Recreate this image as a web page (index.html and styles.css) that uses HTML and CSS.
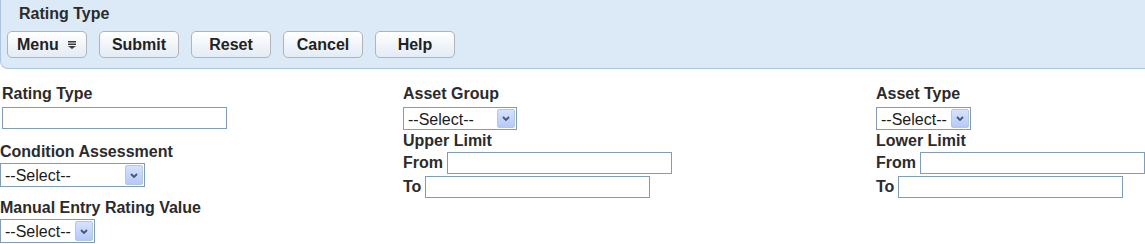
FILE: index.html
```html
<!DOCTYPE html>
<html lang="en">

<head>
    <meta charset="utf-8" />
    <title>Rating Type</title>
    <link rel="stylesheet" href="styles.css">
</head>

<body>
    <header class="toolbar">
        <div class="toolbar-title">Rating Type</div>
        <div class="toolbar-buttons">
            <button type="button" class="btn btn-menu">Menu
                <svg class="menu-icon" width="8" height="8" viewBox="0 0 8 8">
                    <rect x="0" y="0" width="8" height="1.5" fill="#3a3a3a" />
                    <rect x="0" y="2.5" width="8" height="1.5" fill="#3a3a3a" />
                    <polygon points="0,5 8,5 4,8" fill="#3a3a3a" />
                </svg>
            </button>
            <button type="button" class="btn">Submit</button>
            <button type="button" class="btn">Reset</button>
            <button type="button" class="btn">Cancel</button>
            <button type="button" class="btn">Help</button>
        </div>
    </header>

    <main class="form">
        <div class="column">
            <div class="field field-indent">
                <label class="field-label">Rating Type</label>
                <input type="text" class="text-input input-gap" />
            </div>
            <div class="field field-next">
                <label class="field-label">Condition Assessment</label>
                <div class="select select-wide">
                    <span class="select-text">--Select--</span>
                    <span class="select-arrow">
                        <svg width="8" height="5" viewBox="0 0 8 5"><polyline points="1,1 4,4 7,1" fill="none" stroke="#42567c" stroke-width="1.8" /></svg>
                    </span>
                </div>
            </div>
            <div class="field field-last">
                <label class="field-label">Manual Entry Rating Value</label>
                <div class="select select-narrow">
                    <span class="select-text">--Select--</span>
                    <span class="select-arrow">
                        <svg width="8" height="5" viewBox="0 0 8 5"><polyline points="1,1 4,4 7,1" fill="none" stroke="#42567c" stroke-width="1.8" /></svg>
                    </span>
                </div>
            </div>
        </div>

        <div class="column">
            <div class="field">
                <label class="field-label">Asset Group</label>
                <div class="select select-short select-medium">
                    <span class="select-text">--Select--</span>
                    <span class="select-arrow">
                        <svg width="8" height="5" viewBox="0 0 8 5"><polyline points="1,1 4,4 7,1" fill="none" stroke="#42567c" stroke-width="1.8" /></svg>
                    </span>
                </div>
            </div>
            <div class="range">
                <div class="field-label">Upper Limit</div>
                <div class="range-row">
                    <label class="range-label">From</label>
                    <input type="text" class="text-input range-input" />
                </div>
                <div class="range-row">
                    <label class="range-label">To</label>
                    <input type="text" class="text-input range-input" />
                </div>
            </div>
        </div>

        <div class="column">
            <div class="field">
                <label class="field-label">Asset Type</label>
                <div class="select select-short select-narrow">
                    <span class="select-text">--Select--</span>
                    <span class="select-arrow">
                        <svg width="8" height="5" viewBox="0 0 8 5"><polyline points="1,1 4,4 7,1" fill="none" stroke="#42567c" stroke-width="1.8" /></svg>
                    </span>
                </div>
            </div>
            <div class="range">
                <div class="field-label">Lower Limit</div>
                <div class="range-row">
                    <label class="range-label">From</label>
                    <input type="text" class="text-input range-input" />
                </div>
                <div class="range-row">
                    <label class="range-label">To</label>
                    <input type="text" class="text-input range-input" />
                </div>
            </div>
        </div>
    </main>
</body>

</html>
```

FILE: styles.css
```css
body {
    font-family: "Liberation Sans", Arial, sans-serif;
    font-size: 16px;
    background-color: #fff;
    color: #2b2b2b;
    margin: 0;
}

.toolbar {
    background-color: #dce9f6;
    border-left: 1px solid #a9c6e6;
    border-bottom: 1px solid #a9c6e6;
    border-bottom-left-radius: 8px;
    padding: 5px 0 10px 6px;
}

.toolbar-title {
    font-weight: bold;
    line-height: 18px;
    margin-left: 12px;
}

.toolbar-buttons {
    display: flex;
    gap: 12px;
    margin-top: 8px;
}

.btn {
    box-sizing: border-box;
    width: 80px;
    height: 27px;
    padding: 0;
    display: flex;
    align-items: center;
    justify-content: center;
    gap: 9px;
    font-family: inherit;
    font-size: 16px;
    font-weight: bold;
    color: #222;
    background: linear-gradient(#ffffff, #e3ebf5);
    border: 1px solid #b3b3b3;
    border-radius: 5px;
    cursor: pointer;
}

.btn-menu {
    justify-content: flex-start;
    padding-left: 9px;
}

.menu-icon {
    margin-top: 1px;
}

.form {
    display: grid;
    grid-template-columns: 403px 473px 1fr;
    padding-top: 16px;
}

.column {
    display: flex;
    flex-direction: column;
    align-items: flex-start;
}

.field {
    display: flex;
    flex-direction: column;
    align-items: flex-start;
}

.field-indent {
    padding-left: 2px;
}

.field-next {
    margin-top: 14px;
}

.field-last {
    margin-top: 12px;
}

.field-label {
    font-weight: bold;
    line-height: 18px;
}

.text-input {
    box-sizing: border-box;
    width: 225px;
    height: 22px;
    border: 1px solid #7f9db9;
    padding: 0 3px;
    font-family: inherit;
    font-size: 16px;
    margin: 0;
}

.input-gap {
    margin-top: 4px;
}

.select {
    box-sizing: border-box;
    height: 24px;
    margin-top: 2px;
    display: flex;
    justify-content: space-between;
    align-items: stretch;
    border: 1px solid #7f9db9;
    padding: 1px;
    background-color: #fff;
    color: #1a1a1a;
}

.select-short {
    height: 23px;
    margin-top: 4px;
}

.select-wide {
    width: 145px;
}

.select-medium {
    width: 114px;
}

.select-narrow {
    width: 95px;
}

.select-text {
    padding-left: 3px;
    line-height: 21px;
}

.select-arrow {
    width: 16px;
    display: flex;
    align-items: center;
    justify-content: center;
    background: linear-gradient(#d6e2fc, #b5c9f6);
    border: 1px solid #b3c6ee;
    border-radius: 2px;
}

.range {
    margin-top: 2px;
}

.range-row {
    display: flex;
    align-items: center;
    gap: 4px;
    margin-top: 2px;
}

.range-label {
    font-weight: bold;
}
```
